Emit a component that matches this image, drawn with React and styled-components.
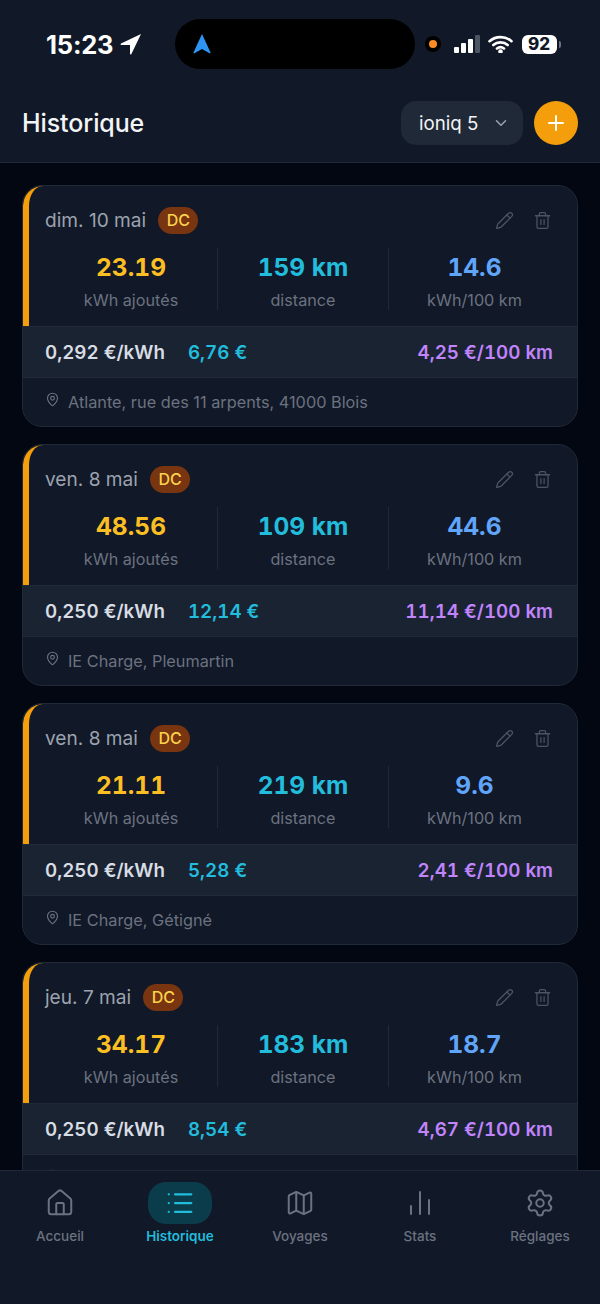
import React from "react";
import styled, { createGlobalStyle } from "styled-components";
import { Pencil, Trash2, MapPin, ChevronDown, Plus, House, List, Map, Settings } from "lucide-react";

const Global = createGlobalStyle`
  html, body { margin: 0; padding: 0; background: #030712; }
  * { box-sizing: border-box; }
  body { font-family: Inter, "Liberation Sans", sans-serif; }
`;
const Page = styled.div`
  width: 600px; height: 1304px; overflow: hidden; display: flex; flex-direction: column; background: #030712;
`;
const Header = styled.header`
  height: 163px; flex: none; background: #111827; border-bottom: 1px solid #1f2937; display: flex; flex-direction: column;
`;
const StatusBar = styled.div`
  height: 88px; display: grid; grid-template-columns: 175px 240px 1fr; align-items: start; padding-top: 19px;
`;
const TimeBox = styled.div`
  display: flex; align-items: center; gap: 7px; padding: 10px 0 0 46px; height: 50px; margin-top: -5px;
  color: #fff; font-size: 25.5px; font-weight: 700; letter-spacing: -0.2px;
`;
const Island = styled.div`
  height: 50px; background: #000; border-radius: 25px; display: flex; align-items: center; padding-left: 17px;
`;
const StatusRight = styled.div`
  display: flex; align-items: center; height: 50px; padding-left: 10px;
`;
const Camera = styled.div`
  width: 16px; height: 16px; border-radius: 50%; background: #000; display: flex; align-items: center; justify-content: center; margin-right: 13px;
  &::after { content: ""; width: 8px; height: 8px; border-radius: 50%; background: #f98a25; }
`;
const Signal = styled.div`
  display: flex; align-items: flex-end; gap: 2.5px; height: 18px; margin-right: 8px;
`;
const SignalBar = styled.span`
  width: 4.5px; height: ${p => p.$h}px; border-radius: 1px; background: ${p => p.$dim ? "#4b5563" : "#fff"};
`;
const Battery = styled.div`
  width: 35px; height: 19px; background: #fff; border-radius: 6px; color: #111827; font-size: 17px; font-weight: 800; display: flex; align-items: center; justify-content: center; margin-left: 9px; position: relative;
  &::after { content: ""; position: absolute; right: -4px; top: 6px; width: 2px; height: 7px; border-radius: 0 2px 2px 0; background: #6b7280; }
`;
const TitleRow = styled.div`
  height: 44px; margin-top: 13px; padding: 0 22px; display: flex; align-items: center; justify-content: space-between;
`;
const Title = styled.h1`
  margin: 0; font-size: 25px; line-height: 28px; font-weight: 500; color: #f3f4f6; letter-spacing: -0.1px;
`;
const Controls = styled.div` display: flex; align-items: center; gap: 11px; `;
const Select = styled.div`
  width: 122px; height: 44px; border-radius: 15px; background: #1f2937; color: #f3f4f6; font-size: 18.7px; display: flex; align-items: center; justify-content: space-between; padding: 0 13px 0 18px;
`;
const AddButton = styled.div`
  width: 44px; height: 44px; border-radius: 50%; background: #f59e0b; color: #fff; display: flex; align-items: center; justify-content: center;
`;
const List_ = styled.main`
  flex: 1; min-height: 0; overflow: hidden; padding: 22px 22px 0; display: flex; flex-direction: column; gap: 17px;
`;
const Card = styled.article`
  flex: none; height: 242px; border: 1px solid #1f2937; border-radius: 20px; overflow: hidden; background: #111827; display: flex; flex-direction: column;
`;
const CardTop = styled.div`
  height: 140px; border-left: 6px solid #f59e0b; padding: 0 17px 0 16px; border-top-left-radius: 20px; display: flex; flex-direction: column;
`;
const CardHead = styled.div`
  height: 62px; padding-top: 6px; display: flex; align-items: center; justify-content: space-between;
`;
const HeadLeft = styled.div` display: flex; align-items: center; gap: 12px; `;
const DateText = styled.span` font-size: 19.1px; color: #9ca3af; `;
const Badge = styled.span`
  height: 27px; padding: 0 8.5px; border-radius: 14px; background: #78350f; color: #fcd34d; font-size: 16px; font-weight: 500; display: flex; align-items: center;
`;
const Actions = styled.div` display: flex; align-items: center; gap: 19px; color: #4b5563; padding-right: 8px; `;
const Stats = styled.div`
  display: grid; grid-template-columns: 172px 171px 1fr;
`;
const Stat = styled.div`
  height: 62px; display: flex; flex-direction: column; align-items: center; justify-content: space-between; border-left: ${p => p.$first ? "none" : "1px solid #1f2937"};
`;
const StatValue = styled.span`
  font-size: 24.5px; line-height: 36px; font-weight: 700; color: ${p => p.$color}; margin-top: 1px; font-variant-numeric: tabular-nums;
`;
const StatLabel = styled.span`
  font-size: 16.2px; line-height: 22px; color: #6b7280; margin-bottom: -1px;
`;
const PriceRow = styled.div`
  height: 52px; background: #1a2332; border-top: 1px solid #1f2937; border-bottom: 1px solid #1f2937; padding: 0 24px 0 22px; display: flex; align-items: center; font-weight: 600; font-size: 18.8px; font-variant-numeric: tabular-nums;
`;
const Price = styled.span` color: #d8dce3; `;
const Cost = styled.span` color: #22bcdc; margin-left: 23px; `;
const Per = styled.span` color: #c084fc; margin-left: auto; `;
const Location = styled.div`
  flex: 1; padding: 0 22px; display: flex; align-items: center; gap: 8px; color: #6b7280; font-size: 16.3px;
  svg { margin-top: -6px; }
`;
const TabBar = styled.nav`
  height: 134px; flex: none; background: #111827; border-top: 1px solid #1f2937; display: grid; grid-template-columns: repeat(5, 1fr); padding: 11px 0 0;
`;
const Tab = styled.div`
  display: flex; flex-direction: column; align-items: center; gap: 4px; color: ${p => p.$active ? "#22bcdc" : "#6b7280"}; font-size: 13.5px; font-weight: ${p => p.$active ? 600 : 500};
`;
const TabIcon = styled.div`
  width: 64px; height: 42px; border-radius: 18px; display: flex; align-items: center; justify-content: center; background: ${p => p.$active ? "#0b3c4c" : "transparent"};
`;

const entries = [
  { d: "dim. 10 mai", v: "23.19", k: "159 km", e: "14.6", p: "0,292 €/kWh", c: "6,76 €", h: "4,25 €/100 km", l: "Atlante, rue des 11 arpents, 41000 Blois" },
  { d: "ven. 8 mai", v: "48.56", k: "109 km", e: "44.6", p: "0,250 €/kWh", c: "12,14 €", h: "11,14 €/100 km", l: "IE Charge, Pleumartin" },
  { d: "ven. 8 mai", v: "21.11", k: "219 km", e: "9.6", p: "0,250 €/kWh", c: "5,28 €", h: "2,41 €/100 km", l: "IE Charge, Gétigné" },
  { d: "jeu. 7 mai", v: "34.17", k: "183 km", e: "18.7", p: "0,250 €/kWh", c: "8,54 €", h: "4,67 €/100 km", l: "IE Charge" },
];

const StatsIcon = () => (
  <svg width="26" height="26" viewBox="0 0 26 26" fill="none" stroke="currentColor" strokeWidth="2" strokeLinecap="round">
    <path d="M4 24v-8M13 24V2M22 24V10" />
  </svg>
);
const tabs = [
  ["Accueil", <House key="a" size={30} strokeWidth={1.6} />],
  ["Historique", <List key="b" size={30} strokeWidth={1.8} />, true],
  ["Voyages", <Map key="c" size={30} strokeWidth={1.6} />],
  ["Stats", <StatsIcon key="d" />],
  ["Réglages", <Settings key="e" size={30} strokeWidth={1.6} />],
];

export default function App() {
  return (
    <Page>
      <Global />
      <Header>
        <StatusBar>
          <TimeBox>
            15:23
            <svg width="22" height="22" viewBox="0 0 22 22"><path d="M21 1 1 10.500c-.8.4-.5 1.400.3 1.400H10v8.800c0 .9 1 1.100 1.400.3z" fill="#fff" /></svg>
          </TimeBox>
          <Island>
            <svg width="20" height="22" viewBox="0 0 20 22"><path d="M10 1 18.500 19.500c.3.7-.4 1.200-1 .8L10 16l-7.500 4.300c-.6.4-1.300-.1-1-.8z" fill="#2f95f5" /></svg>
          </Island>
          <StatusRight>
            <Camera />
            <Signal>
              <SignalBar $h={6} /><SignalBar $h={10} /><SignalBar $h={14} /><SignalBar $h={18} $dim />
            </Signal>
            <svg width="25" height="18" viewBox="0 0 25 18" fill="none" stroke="#fff" strokeWidth="2.600" strokeLinecap="round">
              <path d="M1.500 6.200c6.200-5.500 15.800-5.500 22 0M5.300 10c4-3.500 10.400-3.500 14.400 0M9 13.500c2-1.600 5-1.600 7 0" />
              <circle cx="12.500" cy="16.500" r="1" fill="#fff" />
            </svg>
            <Battery>92</Battery>
          </StatusRight>
        </StatusBar>
        <TitleRow>
          <Title>Historique</Title>
          <Controls>
            <Select>ioniq 5<ChevronDown size={18} color="#9ca3af" /></Select>
            <AddButton><Plus size={24} strokeWidth={2} /></AddButton>
          </Controls>
        </TitleRow>
      </Header>
      <List_>
        {entries.map((x, i) => (
          <Card key={i}>
            <CardTop>
              <CardHead>
                <HeadLeft><DateText>{x.d}</DateText><Badge>DC</Badge></HeadLeft>
                <Actions><Pencil size={19} strokeWidth={1.6} /><Trash2 size={19} strokeWidth={1.6} /></Actions>
              </CardHead>
              <Stats>
                <Stat $first><StatValue $color="#fbbf24">{x.v}</StatValue><StatLabel>kWh ajoutés</StatLabel></Stat>
                <Stat><StatValue $color="#22bcdc">{x.k}</StatValue><StatLabel>distance</StatLabel></Stat>
                <Stat><StatValue $color="#60a5fa">{x.e}</StatValue><StatLabel>kWh/100 km</StatLabel></Stat>
              </Stats>
            </CardTop>
            <PriceRow><Price>{x.p}</Price><Cost>{x.c}</Cost><Per>{x.h}</Per></PriceRow>
            <Location><MapPin size={15} strokeWidth={1.8} />{x.l}</Location>
          </Card>
        ))}
      </List_>
      <TabBar>
        {tabs.map(([label, icon, active]) => (
          <Tab key={label} $active={active}><TabIcon $active={active}>{icon}</TabIcon>{label}</Tab>
        ))}
      </TabBar>
    </Page>
  );
}
